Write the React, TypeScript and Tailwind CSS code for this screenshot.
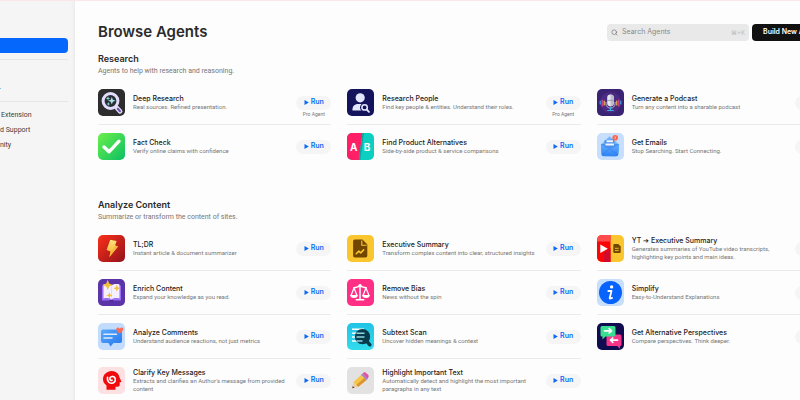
import type { ReactNode } from 'react';
import { Search } from 'lucide-react';

type Agent = {
  name: string;
  desc: string;
  icon: ReactNode;
  pro?: boolean;
};

type Section = {
  title: string;
  desc: string;
  agents: Agent[];
};

function Sparkle({ x, y, r, fill }: { x: number; y: number; r: number; fill: string }) {
  const k = r * 0.28;
  return (
    <path
      fill={fill}
      d={`M${x} ${y - r}L${x + k} ${y - k}L${x + r} ${y}L${x + k} ${y + k}L${x} ${y + r}L${x - k} ${y + k}L${x - r} ${y}L${x - k} ${y - k}Z`}
    />
  );
}

const deepResearch = (
  <>
    <rect width="27" height="27" fill="#2d2d2d" />
    <path d="M18.5 18.5l3.600 3.800" stroke="#e3dcfb" strokeWidth="4.600" strokeLinecap="round" />
    <path d="M19.800 19.800l2.200 2.400" stroke="#6b55ab" strokeWidth="2" strokeLinecap="round" />
    <circle cx="12.500" cy="12" r="7.400" fill="#2a2f33" stroke="#e3dcfb" strokeWidth="3" />
    <Sparkle x={13.8} y={11.8} r={3.8} fill="#a5e6ea" />
    <Sparkle x={10} y={9.4} r={2.2} fill="#8bd4da" />
    <Sparkle x={10.4} y={15} r={2} fill="#8bd4da" />
  </>
);

const factCheck = (
  <>
    <linearGradient id="check" x1="0" y1="0" x2="1" y2="1">
      <stop stopColor="#6df04a" />
      <stop offset="1" stopColor="#0bbf63" />
    </linearGradient>
    <rect width="27" height="27" fill="url(#check)" />
    <path d="M6 14l5 4.8L21 8.2" fill="none" stroke="#fff" strokeWidth="3.4" strokeLinecap="round" strokeLinejoin="round" />
  </>
);

const researchPeople = (
  <>
    <rect width="27" height="27" fill="#14145c" />
    <circle cx="13.2" cy="8.8" r="4.6" fill="#e3e8ff" />
    <path d="M5.5 21.5v-1.2c0-3.6 2.6-5.4 6-5.4h3.2c1.6 0 3 .5 4 1.2L16 21.5z" fill="#e3e8ff" />
    <circle cx="17.6" cy="18.4" r="3" fill="#14145c" stroke="#14145c" strokeWidth="3.2" />
    <circle cx="17.6" cy="18.4" r="2.7" fill="#14145c" stroke="#e3e8ff" strokeWidth="1.5" />
    <path d="M19.8 20.6l2.1 2.2" stroke="#e3e8ff" strokeWidth="1.9" strokeLinecap="round" />
  </>
);

const alternatives = (
  <>
    <rect width="27" height="27" fill="#0ccfc1" />
    <path d="M0 0h15.500L11.800 27H0z" fill="#ff1f67" />
    <path d="M15.500 0h1.500L13.300 27h-1.500z" fill="#08a79f" />
    <text x="6.8" y="18" textAnchor="middle" fill="#fff" fontSize="10" fontWeight="700">A</text>
    <text x="20" y="18" textAnchor="middle" fill="#fff" fontSize="10" fontWeight="700">B</text>
  </>
);

const podcast = (
  <>
    <rect width="27" height="27" fill="#3b2373" />
    <circle cx="13.5" cy="13.5" r="10.5" fill="#4c2b82" />
    <g strokeWidth="1.2" strokeLinecap="round">
      <path d="M3.2 12v3M23.8 12v3" stroke="#35a9e8" />
      <path d="M5.2 11v6M21.8 11v6" stroke="#e8488c" />
      <path d="M7.2 12v4M19.8 12v4" stroke="#f6bd3c" />
    </g>
    <path d="M8.9 13v1.6a4.6 4.6 0 0 0 9.2 0V13" fill="none" stroke="#b9b6d0" strokeWidth="1" />
    <path d="M13.5 18.5v2.6M10.8 21.5h5.4" stroke="#35b6de" strokeWidth="1.2" strokeLinecap="round" />
    <rect x="10.2" y="5.4" width="6.6" height="12" rx="3.3" fill="#e6e6ee" />
    <path d="M13.5 5.4a3.3 3.3 0 0 1 3.3 3.3v5.4a3.3 3.3 0 0 1-3.3 3.3z" fill="#bcbdcd" />
    <path d="M10.2 11.4h6.6" stroke="#8c8da6" strokeWidth=".8" />
  </>
);

const emails = (
  <>
    <linearGradient id="mail" x1="0" y1="0" x2="0" y2="1">
      <stop stopColor="#62acff" />
      <stop offset="1" stopColor="#2c82f5" />
    </linearGradient>
    <rect width="27" height="27" fill="#c7dffd" />
    <path d="M4 11.5L12.500 3.200 22 11.500z" fill="#76b6fc" />
    <path d="M4 11h18l-.8 10.400a2 2 0 0 1-2 1.800L6.600 23a2 2 0 0 1-2-1.800z" fill="#4796f6" />
    <path d="M7.500 7.200l9.500-1 1 9.800H8z" fill="#4a8ff0" />
    <path d="M9.500 8.200h6.500M8.500 11.500h8.500" stroke="#eef5ff" strokeWidth="2" />
    <path d="M4 12l8.500 4.500L22 12l-.8 9.400a2 2 0 0 1-2 1.800H6.600a2 2 0 0 1-2-1.800z" fill="url(#mail)" />
    <path d="M4.800 22l7-5.600M21 22l-7.600-5.600" stroke="#2773df" strokeWidth=".5" />
    <circle cx="18.200" cy="4.800" r="2.800" fill="#f4664f" />
    <path d="M18.200 3.500v2.600" stroke="#ffc9be" strokeWidth=".9" />
  </>
);

const tldr = (
  <>
    <linearGradient id="red" x1="0" y1="0" x2="1" y2="1">
      <stop stopColor="#fb3019" />
      <stop offset="1" stopColor="#92121b" />
    </linearGradient>
    <linearGradient id="bolt" x1="0" y1="0" x2="0" y2="1">
      <stop stopColor="#ffe27a" />
      <stop offset="1" stopColor="#f9ab2d" />
    </linearGradient>
    <rect width="27" height="27" fill="url(#red)" />
    <path d="M12.200 4.800l6.400 1.200-1.500 4.600 2.900 1-8.600 10.400 1.200-5.500-4-1.500z" fill="url(#bolt)" />
    <path d="M17.100 10.600l2.900 1-8.600 10.400 1.200-5.500 3-2.700z" fill="#f8b640" />
  </>
);

const execSummary = (
  <>
    <rect width="27" height="27" fill="#fac62f" />
    <path d="M7.800 4.500h7.700l4.800 5v11.300a1.700 1.700 0 0 1-1.700 1.700H7.800a1.700 1.700 0 0 1-1.700-1.700V6.200a1.700 1.700 0 0 1 1.700-1.700z" fill="#714700" />
    <path d="M14.800 5.500v4.700h4.700" fill="none" stroke="#fac62f" strokeWidth="1.100" />
    <path d="M9.200 18.800l2.700-2.700 1.800 1.800 3-3" fill="none" stroke="#fac62f" strokeWidth="1.500" strokeLinecap="round" strokeLinejoin="round" />
  </>
);

const ytSummary = (
  <>
    <rect width="27" height="27" fill="#fac62f" />
    <path d="M0 0h13.500v27H0z" fill="#fb0509" />
    <path d="M0 0h13.500v6.500H0z" fill="#ff4d4d" />
    <path d="M7 27L7 18 13.500 13v14z" fill="#cf0a2c" />
    <path d="M3.300 9.500l7.500 4.200-7.500 4.200z" fill="#fff" />
    <path d="M17.300 9h4l2.400 2.500V17a1 1 0 0 1-1 1h-5.400a1 1 0 0 1-1-1v-7a1 1 0 0 1 1-1z" fill="#714700" />
    <path d="M18 13.300h3.700M18 15.600h3.700" stroke="#fac62f" strokeWidth=".9" />
  </>
);

const enrich = (
  <>
    <rect width="27" height="27" fill="#5b35a8" />
    <path d="M4 6.500h19v15H4z" fill="#9b6cf5" />
    <path d="M5.500 5.500c3-.8 6-.5 8 1 2-1.500 5-1.800 8-1v14c-3-.8-6-.5-8 1-2-1.500-5-1.800-8-1z" fill="#f5f0ff" />
    <path d="M13.500 7.500v12" stroke="#ded3f5" strokeWidth=".8" />
    <path d="M11.500 21.800h4" stroke="#3e207f" strokeWidth="1" />
    <Sparkle x={9.7} y={6} r={5.2} fill="#f3c138" />
    <Sparkle x={18.8} y={9.2} r={3.4} fill="#f3c138" />
    <Sparkle x={11.4} y={16.4} r={3.2} fill="#f3c138" />
  </>
);

const removeBias = (
  <>
    <rect width="27" height="27" fill="#ff2f86" />
    <g fill="none" stroke="#fff" strokeWidth="1.500" strokeLinecap="round" strokeLinejoin="round">
      <path d="M13 6v14.500M9.300 20.800h7.400M6.800 8.800c3 0 4-1.600 6.200-1.600s3.200 1.600 6.200 1.600" />
      <path d="M7 9l-3 7.500M7 9l3 7.500M19 9l-3 7.500M19 9l3 7.500" strokeWidth="1.200" />
    </g>
    <circle cx="13" cy="6.600" r="1.700" fill="#fff" />
    <path d="M3.200 16h7.600a3.800 3 0 0 1-7.600 0zM15.200 16h7.600a3.800 3 0 0 1-7.600 0z" fill="#fff" />
  </>
);

const simplify = (
  <>
    <rect width="27" height="27" fill="#c7dffb" />
    <circle cx="13.500" cy="13.500" r="11.500" fill="#0763fb" />
    <circle cx="14.600" cy="7.900" r="1.700" fill="#fff" />
    <path d="M11.300 12h3.200l-1.800 7c-.1.600.3.700 1 .5l1.400-.6" fill="none" stroke="#fff" strokeWidth="1.800" strokeLinecap="round" strokeLinejoin="round" />
  </>
);

const comments = (
  <>
    <linearGradient id="bubble" x1="0" y1="0" x2="1" y2="1">
      <stop stopColor="#5aaafc" />
      <stop offset="1" stopColor="#2477ed" />
    </linearGradient>
    <rect width="27" height="27" fill="#c3dcfc" />
    <path d="M5 6.500h17a2 2 0 0 1 2 2v9.500a2 2 0 0 1-2 2h-6.500l-3 3.500-2-3.500H5a2 2 0 0 1-2-2V8.500a2 2 0 0 1 2-2z" fill="url(#bubble)" />
    <path d="M6 11.300h12.500M6 15h8" stroke="#dcecff" strokeWidth="1.500" strokeLinecap="round" />
    <path d="M21.800 10.500c-4.500-3-3.900-6-1.900-6 1 0 1.700.7 1.900 1.400.4-.8 1-1.400 1.900-1.400 2.300 0 2.300 3.500-1.900 6z" fill="#fb6b55" />
  </>
);

const subtext = (
  <>
    <linearGradient id="scan" x1="0" y1="0" x2="0" y2="1">
      <stop stopColor="#22c3e6" />
      <stop offset="1" stopColor="#31dcec" />
    </linearGradient>
    <rect width="27" height="27" fill="url(#scan)" />
    <path d="M5 6.300h12M5 10.200h8M5 14.100h8M5 18h12" stroke="#fff" strokeWidth="1.500" />
    <circle cx="15.500" cy="13.700" r="7.600" fill="#073a4b" />
    <path d="M19.500 18l3.400 3.800" stroke="#073a4b" strokeWidth="3.400" strokeLinecap="round" />
    <path d="M9.500 10.200h8M9.500 14.100h8M9.500 18h6" stroke="#8fd6df" strokeWidth="1.500" />
  </>
);

const perspectives = (
  <>
    <rect width="27" height="27" fill="#110c50" />
    <path d="M11 11.500h12a1.500 1.500 0 0 1 1.500 1.500v8.500a1.500 1.500 0 0 1-1.500 1.500v2.700L20.200 23H11a1.500 1.500 0 0 1-1.500-1.500V13a1.500 1.500 0 0 1 1.500-1.500z" fill="#f6348a" />
    <path d="M5 3h12a1.500 1.500 0 0 1 1.500 1.500V12a1.500 1.500 0 0 1-1.500 1.500H8.500L5.500 16.500v-3H5A1.500 1.500 0 0 1 3.500 12V4.500A1.500 1.500 0 0 1 5 3z" fill="#38df91" />
    <g fill="none" stroke="#fff" strokeWidth="1.700" strokeLinecap="round" strokeLinejoin="round">
      <path d="M7.500 7.800h6.700M12.200 5.600l2.300 2.200-2.300 2.200" />
      <path d="M20.500 17.200h-6.700M15.800 15l-2.300 2.200 2.300 2.200" />
    </g>
  </>
);

const clarify = (
  <>
    <rect width="27" height="27" fill="#fde0e1" />
    <path d="M8.500 22.800v-4.300C6.200 16.800 5 14.800 5 12.300 5 7.600 8.800 4 13.600 4c4.500 0 7.700 3 8 6.800l1.700 3.400c.2.500 0 .9-.6 1h-1v2.600c0 1.200-.8 2-2 2h-2.200v3z" fill="#ee0a0d" />
    <path d="M9.500 10.200c-.5 3.800 1.300 6 3.900 6 2.200 0 3.900-1.500 3.900-3.600 0-1.900-1.300-3.100-2.900-3.100M14.200 9.500c-1.900.2-2.600 1.300-2.300 2.600.2 1 1.200 1.500 2.100 1.100" fill="none" stroke="#fff" strokeWidth="1.600" strokeLinecap="round" />
  </>
);

const highlight = (
  <>
    <rect width="27" height="27" fill="#e2e2e2" />
    <path d="M5.300 21.300l1-6 5 4.500z" fill="#f1cfa4" />
    <path d="M5.300 21.300l.4-2.400 2 1.800z" fill="#51403c" />
    <path d="M6.300 15.300l7.700-7.300 5.500 5-8.200 6.800z" fill="#f8c646" />
    <path d="M9.300 18l8-7 2.200 2-8.200 6.800z" fill="#dc9330" />
    <path d="M14 8l1.600-1.400 5.400 5-1.500 1.400z" fill="#a684c4" />
    <path d="M15.600 6.600l.9-.8c.8-.6 1.800-.6 2.600.1l2 1.900c.8.8.8 2 .1 2.800l-.8 1z" fill="#df54a4" />
  </>
);

const sections: Section[] = [
  {
    title: 'Research',
    desc: 'Agents to help with research and reasoning.',
    agents: [
      { name: 'Deep Research', desc: 'Real sources. Refined presentation.', icon: deepResearch, pro: true },
      { name: 'Research People', desc: 'Find key people & entities. Understand their roles.', icon: researchPeople, pro: true },
      { name: 'Generate a Podcast', desc: 'Turn any content into a sharable podcast', icon: podcast },
      { name: 'Fact Check', desc: 'Verify online claims with confidence', icon: factCheck },
      { name: 'Find Product Alternatives', desc: 'Side-by-side product & service comparisons', icon: alternatives },
      { name: 'Get Emails', desc: 'Stop Searching. Start Connecting.', icon: emails },
    ],
  },
  {
    title: 'Analyze Content',
    desc: 'Summarize or transform the content of sites.',
    agents: [
      { name: 'TL;DR', desc: 'Instant article & document summarizer', icon: tldr },
      { name: 'Executive Summary', desc: 'Transform complex content into clear, structured insights', icon: execSummary },
      { name: 'YT ➔ Executive Summary', desc: 'Generates summaries of YouTube video transcripts, highlighting key points and main ideas.', icon: ytSummary },
      { name: 'Enrich Content', desc: 'Expand your knowledge as you read.', icon: enrich },
      { name: 'Remove Bias', desc: 'News without the spin', icon: removeBias },
      { name: 'Simplify', desc: 'Easy-to-Understand Explanations', icon: simplify },
      { name: 'Analyze Comments', desc: 'Understand audience reactions, not just metrics', icon: comments },
      { name: 'Subtext Scan', desc: 'Uncover hidden meanings & context', icon: subtext },
      { name: 'Get Alternative Perspectives', desc: 'Compare perspectives. Think deeper.', icon: perspectives },
      { name: 'Clarify Key Messages', desc: "Extracts and clarifies an Author's message from provided content", icon: clarify },
      { name: 'Highlight Important Text', desc: 'Automatically detect and highlight the most important paragraphs in any text', icon: highlight },
    ],
  },
];

const links = ['Extension', 'd Support', 'nity'];

function Sidebar() {
  return (
    <aside className="w-[75px] shrink-0 bg-[#f5f5f5] pt-[37px] pr-[7px] shadow-[inset_-4px_0_4px_-3px_rgba(0,0,0,0.06)]">
      <button className="block h-[15px] w-full rounded-r bg-[#0567fc]" aria-pressed="true" />
      <div className="mt-[6px] border-t border-[#e6e6e6]" />
      <div className="flex h-[41px] items-end pb-3">
        <span className="h-px w-px bg-[#7cc8f5]" />
      </div>
      <nav className="flex flex-col border-t border-[#e6e6e6] pt-[6px]">
        {links.map((link) => (
          <a key={link} href="#" className="py-[3px] font-['Roboto',sans-serif] text-[7px] leading-[9px] text-[#3d3d3d] first:pl-px">
            {link}
          </a>
        ))}
      </nav>
    </aside>
  );
}

function AgentRow({ agent, last }: { agent: Agent; last: boolean }) {
  return (
    <li className={`flex h-11 items-center border-b ${last ? 'border-transparent' : 'border-[#ebebeb]'}`}>
      <svg viewBox="0 0 27 27" className="size-[27px] shrink-0 rounded-[5px]" aria-hidden="true">
        {agent.icon}
      </svg>
      <div className="mr-1 ml-2 min-w-0 flex-1">
        <h3 className="text-[7px] leading-[8px] font-medium text-[#222]">{agent.name}</h3>
        <p className="font-['Roboto',sans-serif] text-[6px] leading-[8px] text-[#777]">{agent.desc}</p>
      </div>
      <div className="h-[14px] w-[35px] shrink-0">
        <button className="flex h-[14px] w-full items-center justify-center gap-[2px] rounded-full bg-[#f5f5f5] text-[7px] font-semibold text-[#0b69f5]">
          <svg viewBox="0 0 5 5" className="size-[5px]" fill="currentColor" aria-hidden="true">
            <path d="M.5 0l4.300 2.500L.5 5z" />
          </svg>
          Run
        </button>
        {agent.pro && (
          <p className="mt-px text-center font-['Roboto',sans-serif] text-[5px] leading-[6px] text-[#777]">Pro Agent</p>
        )}
      </div>
    </li>
  );
}

export default function App() {
  return (
    <div className="flex h-screen overflow-hidden border-t border-[#fbe6ea] bg-[#fdfdfd] font-['Inter',sans-serif]">
      <Sidebar />
      <main className="min-w-[778px] flex-1 pt-[22px] pr-[23px] pl-[23px]">
        <header className="mb-[11px] flex h-[18px] items-center">
          <h1 className="flex-1 text-[15px] leading-[18px] font-semibold text-[#2b2b2b]">Browse Agents</h1>
          <label className="mr-[3px] flex h-[17px] w-[142px] items-center rounded bg-[#e9e9e9] px-1">
            <Search className="size-[7px] shrink-0 text-[#666]" />
            <input
              type="text"
              aria-label="Search Agents"
              placeholder="Search Agents"
              className="ml-1 min-w-0 flex-1 bg-transparent text-[7px] outline-none placeholder:text-[#888]"
            />
            <kbd className="font-['Inter',sans-serif] text-[6px] text-[#bbb]">⌘+K</kbd>
          </label>
          <button className="h-[17px] rounded bg-[#111] px-[11px] text-[7px] font-semibold whitespace-nowrap text-white">
            Build New Agent
          </button>
        </header>

        {sections.map((section) => (
          <section key={section.title} className="mb-[29px]">
            <h2 className="text-[9px] leading-[14px] font-semibold text-[#2b2b2b]">{section.title}</h2>
            <p className="mb-[5px] font-['Roboto',sans-serif] text-[7px] leading-[10px] text-[#777]">{section.desc}</p>
            <ul className="grid grid-cols-3 gap-x-4">
              {section.agents.map((agent, i) => (
                <AgentRow key={agent.name} agent={agent} last={i + 3 >= section.agents.length} />
              ))}
            </ul>
          </section>
        ))}
      </main>
    </div>
  );
}
